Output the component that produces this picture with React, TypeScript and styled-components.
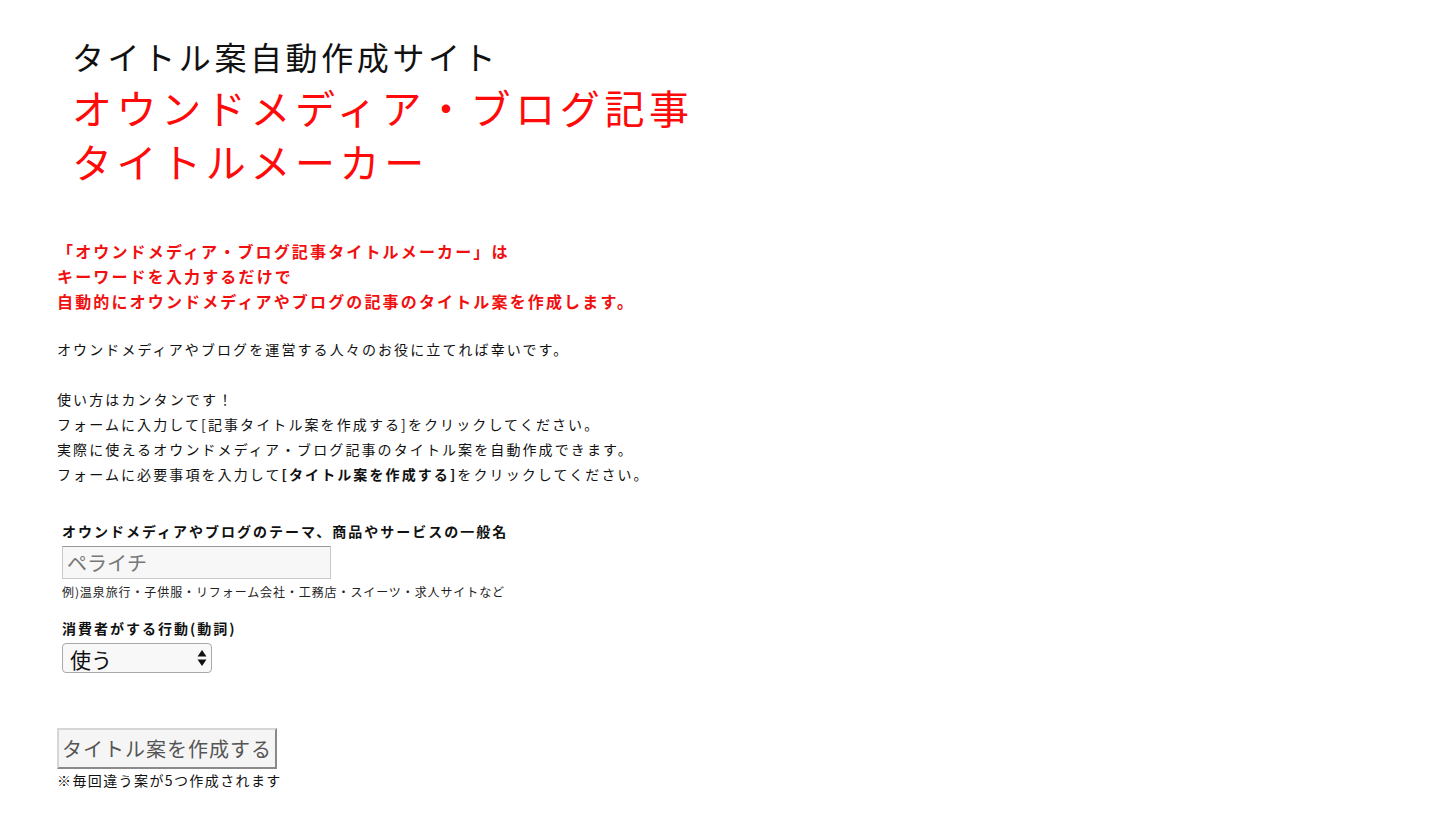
import React, { useState } from "react";
import styled, { createGlobalStyle } from "styled-components";

const GlobalStyle = createGlobalStyle`
    html, body {
        margin: 0;
        padding: 0;
        background: #fff;
    }
    body {
        font-family: "Noto Sans CJK JP", "Noto Sans", sans-serif;
        color: #111;
    }
`;

const verbs = ["使う", "買う", "選ぶ", "作る", "学ぶ", "始める"];

const App: React.FC = () => {
    const [theme, setTheme] = useState<string>("");
    const [verb, setVerb] = useState<string>(verbs[0]);

    return (
        <Page>
            <GlobalStyle />
            <Header>
                <span className="sub">タイトル案自動作成サイト</span>
                <span className="main">オウンドメディア・ブログ記事</span>
                <span className="main">タイトルメーカー</span>
            </Header>

            <Lead>
                「オウンドメディア・ブログ記事タイトルメーカー」は
                <br />
                キーワードを入力するだけで
                <br />
                自動的にオウンドメディアやブログの記事のタイトル案を作成します。
            </Lead>

            <Text>オウンドメディアやブログを運営する人々のお役に立てれば幸いです。</Text>

            <Text>
                使い方はカンタンです！
                <br />
                フォームに入力して[記事タイトル案を作成する]をクリックしてください。
                <br />
                実際に使えるオウンドメディア・ブログ記事のタイトル案を自動作成できます。
                <br />
                フォームに必要事項を入力して<b>[タイトル案を作成する]</b>をクリックしてください。
            </Text>

            <Form onSubmit={(e) => e.preventDefault()}>
                <Field>
                    <Label>オウンドメディアやブログのテーマ、商品やサービスの一般名</Label>
                    <TextInput
                        type="text"
                        placeholder="ペライチ"
                        value={theme}
                        onChange={(e) => setTheme(e.target.value)}
                    />
                    <Hint>例)温泉旅行・子供服・リフォーム会社・工務店・スイーツ・求人サイトなど</Hint>
                </Field>
                <Field>
                    <Label>消費者がする行動(動詞)</Label>
                    <SelectWrap>
                        <Select value={verb} onChange={(e) => setVerb(e.target.value)}>
                            {verbs.map((v) => (
                                <option key={v} value={v}>
                                    {v}
                                </option>
                            ))}
                        </Select>
                        <Arrows viewBox="0 0 10 18" width="10" height="18">
                            <path d="M5 1 L9.5 7.5 L0.5 7.5 Z" fill="#111" />
                            <path d="M5 17 L9.5 10.5 L0.5 10.5 Z" fill="#111" />
                        </Arrows>
                    </SelectWrap>
                </Field>
                <Submit type="submit">タイトル案を作成する</Submit>
                <Note>※毎回違う案が5つ作成されます</Note>
            </Form>
        </Page>
    );
};

export default App;

const Page = styled.div`
    padding: 32px 0 40px 57px;
    width: 900px;
`;

const Header = styled.h1`
    margin: 0 0 0 15px;
    display: flex;
    flex-direction: column;
    font-weight: 400;

    > span.sub {
        font-size: 32px;
        letter-spacing: 3.6px;
        line-height: 48px;
        color: #111;
    }
    > span.main {
        font-size: 40px;
        letter-spacing: 4.6px;
        line-height: 54px;
        color: #ff0a0a;
    }
`;

const Lead = styled.p`
    margin: 51px 0 23px 0;
    color: #f01010;
    font-size: 16px;
    font-weight: 700;
    letter-spacing: 2.15px;
    line-height: 25px;
`;

const Text = styled.p`
    margin: 0 0 25px 0;
    font-size: 14px;
    letter-spacing: 2.1px;
    line-height: 25px;
    color: #111;

    > b {
        font-weight: 700;
    }
`;

const Form = styled.form`
    display: flex;
    flex-direction: column;
    align-items: flex-start;
    margin-top: 32px;
`;

const Field = styled.div`
    display: flex;
    flex-direction: column;
    align-items: flex-start;
    padding-left: 5px;
    margin-bottom: 15px;
`;

const Label = styled.label`
    font-size: 14px;
    font-weight: 700;
    letter-spacing: 2px;
    line-height: 24px;
    margin-bottom: 3px;
    color: #111;
`;

const TextInput = styled.input`
    box-sizing: border-box;
    width: 269px;
    height: 33px;
    margin: 0;
    padding: 0 4px;
    border: 1px solid #c9c9c9;
    border-top-color: #9a9a9a;
    background: #f7f7f7;
    font-family: "Noto Sans CJK JP", "Noto Sans", sans-serif;
    font-size: 20px;
    color: #333;
    outline: none;

    &::placeholder {
        color: #777;
    }
`;

const Hint = styled.span`
    margin-top: 4px;
    font-size: 12px;
    letter-spacing: 0.9px;
    line-height: 18px;
    color: #222;
`;

const SelectWrap = styled.div`
    position: relative;
    width: 150px;
    height: 30px;
`;

const Select = styled.select`
    appearance: none;
    -webkit-appearance: none;
    box-sizing: border-box;
    width: 150px;
    height: 30px;
    margin: 0;
    padding: 0 24px 0 7px;
    border: 1px solid #a9a9a9;
    border-radius: 4px;
    background: #f8f8f8;
    font-family: "Noto Sans CJK JP", "Noto Sans", sans-serif;
    font-size: 21px;
    color: #111;
    outline: none;
`;

const Arrows = styled.svg`
    position: absolute;
    right: 5px;
    top: 6px;
    pointer-events: none;
`;

const Submit = styled.button`
    margin-top: 40px;
    box-sizing: border-box;
    height: 41px;
    padding: 0 3px;
    border: 2px solid;
    border-color: #d6d6d6 #8a8a8a #8a8a8a #d6d6d6;
    background: #f5f5f5;
    font-family: "Noto Sans CJK JP", "Noto Sans", sans-serif;
    font-size: 20px;
    letter-spacing: 1px;
    color: #555;
    cursor: pointer;
`;

const Note = styled.span`
    margin-top: 1px;
    font-size: 14px;
    letter-spacing: 1.4px;
    line-height: 20px;
    color: #111;
`;
